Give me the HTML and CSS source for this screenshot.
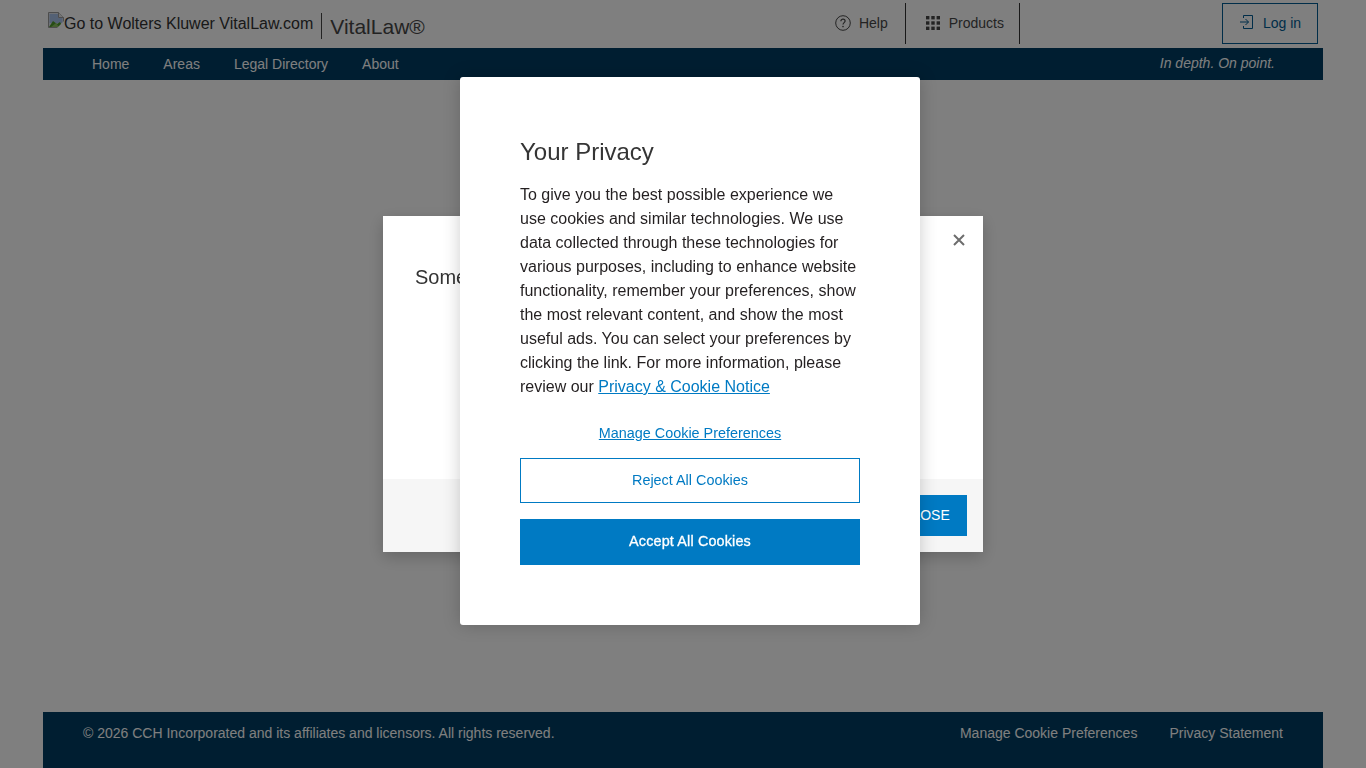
FILE: index.html
```html
<!DOCTYPE html>
<html lang="en">
<head>
<meta charset="utf-8">
<title>VitalLaw</title>
<link rel="stylesheet" href="styles.css">
</head>
<body>
<div class="page">
  <header class="topbar">
    <a class="brand" href="#">
      <svg class="broken" width="16" height="16" viewBox="0 0 16 16" aria-hidden="true">
        <path d="M0.5 0.5H10.5L15.5 5.5V15.5H0.5Z" fill="#dfe3ea" stroke="#9a9a9a"/>
        <path d="M10.5 0.5V5.5H15.5" fill="#e8e8e8" stroke="#9a9a9a"/>
        <path d="M1.5 2H10V6H14.5V11H1.5Z" fill="#a9c2ea"/>
        <path d="M1 15L5 9L9 12L12 10L15 15Z" fill="#4f9a2c"/>
        <path d="M3 15L8 11L11 15Z" fill="#8ac060"/>
        <path d="M9 16L16 9V16Z" fill="#fff"/>
      </svg><span>Go to Wolters Kluwer VitalLaw.com</span>
    </a>
    <span class="product">VitalLaw®</span>
    <div class="tools">
      <a class="tool tool-help" href="#">
        <svg width="16" height="16" viewBox="0 0 16 16" fill="none" stroke="#474747" aria-hidden="true">
          <circle cx="8" cy="8" r="7.3"/>
          <path d="M5.9 6.2C5.9 5 6.9 4.2 8 4.2S10.1 5 10.1 6.1C10.1 7.6 8 7.7 8 9.5" stroke-width="1.2"/>
          <circle cx="8" cy="11.6" r=".8" fill="#474747" stroke="none"/>
        </svg>
        <span>Help</span>
      </a>
      <a class="tool tool-products" href="#">
        <svg width="16" height="16" viewBox="0 0 16 16" fill="#474747" aria-hidden="true">
          <rect x="1" y="1" width="3.4" height="3.4"/><rect x="6.3" y="1" width="3.4" height="3.4"/><rect x="11.6" y="1" width="3.4" height="3.4"/>
          <rect x="1" y="6.3" width="3.4" height="3.4"/><rect x="6.3" y="6.3" width="3.4" height="3.4"/><rect x="11.6" y="6.3" width="3.4" height="3.4"/>
          <rect x="1" y="11.6" width="3.4" height="3.4"/><rect x="6.3" y="11.6" width="3.4" height="3.4"/><rect x="11.6" y="11.6" width="3.4" height="3.4"/>
        </svg>
        <span>Products</span>
      </a>
    </div>
    <a class="login" href="#">
      <svg width="16" height="16" viewBox="0 0 16 16" fill="none" stroke="#005b92" aria-hidden="true">
        <path d="M4.5 4V1.5H13.5V14.5H4.5V12"/>
        <path d="M1 8H9.5M6.5 5L9.5 8L6.5 11"/>
      </svg>
      <span>Log in</span>
    </a>
  </header>
  <nav class="mainnav">
    <ul class="navlist">
      <li><a href="#">Home</a></li>
      <li><a href="#">Areas</a></li>
      <li><a href="#">Legal Directory</a></li>
      <li><a href="#">About</a></li>
    </ul>
    <em class="tagline">In depth. On point.</em>
  </nav>
  <main class="content"></main>
  <footer class="sitefoot">
    <span>© 2026 CCH Incorporated and its affiliates and licensors. All rights reserved.</span>
    <div class="footlinks">
      <a href="#">Manage Cookie Preferences</a>
      <a href="#">Privacy Statement</a>
    </div>
  </footer>
</div>

<div class="backdrop"></div>

<div class="dialog" role="dialog">
  <div class="dialog-body">
    <p class="dialog-msg">Some</p>
    <button class="dialog-x" aria-label="Close">
      <svg width="12" height="12" viewBox="0 0 12 12" fill="none" stroke="#6d6d6d" stroke-width="2"><path d="M1 1L11 11M11 1L1 11"/></svg>
    </button>
  </div>
  <div class="dialog-foot"><button class="dialog-close">CLOSE</button></div>
</div>

<section class="cookie" role="dialog">
  <h2 class="cookie-title">Your Privacy</h2>
  <p class="cookie-text">To give you the best possible experience we use cookies and similar technologies. We use data collected through these technologies for various purposes, including to enhance website functionality, remember your preferences, show the most relevant content, and show the most useful ads. You can select your preferences by clicking the link. For more information, please review our <a href="#">Privacy &amp; Cookie Notice</a></p>
  <a class="cookie-manage" href="#">Manage Cookie Preferences</a>
  <button class="btn-reject">Reject All Cookies</button>
  <button class="btn-accept">Accept All Cookies</button>
</section>
</body>
</html>
```
FILE: styles.css
```css
* { box-sizing: border-box; }
html, body { height: 100%; }
body {
  margin: 0;
  overflow: hidden;
  background: #fff;
  color: #474747;
  font-family: "Liberation Sans", Arial, sans-serif;
  font-size: 14px;
}
a { text-decoration: none; color: inherit; }

.page {
  width: 1280px;
  height: 768px;
  margin: 0 auto;
  display: flex;
  flex-direction: column;
}

.topbar {
  height: 48px;
  flex: none;
  display: flex;
  align-items: flex-start;
}
.brand {
  display: flex;
  align-items: flex-start;
  margin: 12px 0 0 5px;
  font-size: 16px;
  line-height: 22px;
  color: #333;
  white-space: nowrap;
}
.brand span { padding-top: 1px; }
.broken { flex: none; }
.product {
  margin: 13px 0 0 8px;
  height: 26px;
  padding-left: 8px;
  border-left: 1px solid #474747;
  font-size: 21px;
  line-height: 28px;
  color: #474747;
}
.tools {
  display: flex;
  margin-left: auto;
  height: 41px;
  margin-top: 3px;
}
.tool {
  display: flex;
  align-items: center;
  gap: 8px;
  height: 41px;
  border-right: 1px solid #333;
}
.tool span, .login span { margin-top: -2px; }
.tool-help { padding: 0 17px 0 0; }
.tool-products { padding: 0 15px 0 19px; }
.tool svg { margin-top: -2px; }
.login {
  display: flex;
  align-items: center;
  justify-content: center;
  gap: 8px;
  width: 96px;
  height: 41px;
  margin: 3px 5px 0 202px;
  border: 1px solid #005b92;
  color: #005b92;
}
.login svg { margin-top: -3px; }

.mainnav {
  height: 32px;
  flex: none;
  display: flex;
  align-items: center;
  justify-content: space-between;
  padding: 0 48px 0 32px;
  background: #003c62;
  color: #fff;
}
.navlist {
  display: flex;
  margin: 0;
  padding: 0;
  list-style: none;
}
.navlist a { display: block; padding: 0 17px; }
.tagline { font-style: italic; margin-top: -2px; }

.content { flex: 1; }

.sitefoot {
  height: 56px;
  flex: none;
  display: flex;
  justify-content: space-between;
  padding: 13px 40px 0;
  background: #003c62;
  color: #fff;
}
.footlinks { display: flex; gap: 32px; }

.backdrop {
  position: fixed;
  inset: 0;
  background: rgba(0, 0, 0, .5);
}

.dialog {
  position: fixed;
  left: 383px;
  top: 216px;
  width: 600px;
  height: 336px;
  display: flex;
  flex-direction: column;
  background: #fff;
  box-shadow: 0 5px 15px rgba(0, 0, 0, .2);
}
.dialog-body {
  flex: 1;
  position: relative;
  padding: 49px 32px 0;
}
.dialog-msg {
  margin: 0;
  font-size: 20px;
  line-height: 24px;
  color: #333;
}
.dialog-x {
  position: absolute;
  top: 18px;
  right: 18px;
  width: 12px;
  height: 12px;
  padding: 0;
  border: 0;
  background: none;
  display: flex;
}
.dialog-foot {
  height: 73px;
  flex: none;
  display: flex;
  justify-content: flex-end;
  align-items: flex-start;
  padding: 16px;
  background: #f6f6f6;
}
.dialog-close {
  width: 80px;
  height: 41px;
  padding: 0 2px 2px 0;
  border: 0;
  background: #007ac3;
  color: #fff;
  font: 14px "Liberation Sans", Arial, sans-serif;
}

.cookie {
  position: fixed;
  left: 460px;
  top: 77px;
  width: 460px;
  height: 548px;
  padding: 60px 60px 0;
  display: flex;
  flex-direction: column;
  background: #fff;
  border-radius: 3px;
  box-shadow: 0 0 18px rgba(0, 0, 0, .2);
}
.cookie-title {
  margin: 0 0 17px;
  font-size: 24px;
  font-weight: 400;
  line-height: 29px;
  color: #353535;
}
.cookie-text {
  margin: 0 0 23px;
  font-size: 16px;
  line-height: 24px;
  color: #231f20;
}
.cookie-text a, .cookie-manage {
  color: #007ac3;
  text-decoration: underline;
}
.cookie-manage {
  align-self: center;
  font-size: 14.4px;
  line-height: 22px;
}
.btn-reject, .btn-accept {
  width: 340px;
  font: 14.4px "Liberation Sans", Arial, sans-serif;
}
.btn-reject {
  height: 45px;
  margin-top: 14px;
  padding-bottom: 3px;
  border: 1px solid #007ac3;
  background: #fff;
  color: #007ac3;
}
.btn-accept {
  height: 46px;
  margin-top: 16px;
  padding-bottom: 3px;
  border: 0;
  background: #007ac3;
  color: #fff;
  letter-spacing: .15px;
  -webkit-text-stroke: .3px #fff;
}
```
